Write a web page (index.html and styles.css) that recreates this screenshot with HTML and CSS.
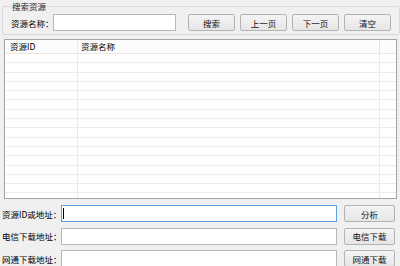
FILE: index.html
```html
<!DOCTYPE html>
<html lang="zh-CN">
<head>
    <meta charset="UTF-8">
    <title>资源下载</title>
    <link rel="stylesheet" href="styles.css">
</head>
<body>
    <fieldset class="search-group">
        <legend>搜索资源</legend>
        <div class="search-row">
            <label class="search-label">资源名称：</label>
            <input class="text-box search-input" type="text">
            <button class="btn btn-search">搜索</button>
            <button class="btn">上一页</button>
            <button class="btn">下一页</button>
            <button class="btn">清空</button>
        </div>
    </fieldset>

    <div class="list-view">
        <div class="list-header">
            <div class="col col-id">资源ID</div>
            <div class="col col-name">资源名称</div>
            <div class="col col-rest"></div>
        </div>
        <div class="list-body">
            <div class="col col-id"></div>
            <div class="col col-name"></div>
            <div class="col col-rest"></div>
        </div>
    </div>

    <div class="address-form">
        <div class="form-row">
            <label class="form-label">资源ID或地址：</label>
            <div class="input-wrap">
                <input class="text-box focused" type="text">
                <span class="caret"></span>
            </div>
            <button class="btn btn-side">分析</button>
        </div>
        <div class="form-row">
            <label class="form-label">电信下载地址：</label>
            <div class="input-wrap">
                <input class="text-box" type="text">
            </div>
            <button class="btn btn-side">电信下载</button>
        </div>
        <div class="form-row">
            <label class="form-label">网通下载地址：</label>
            <div class="input-wrap">
                <input class="text-box" type="text">
            </div>
            <button class="btn btn-side">网通下载</button>
        </div>
    </div>
</body>
</html>
```

FILE: styles.css
```css
body {
    margin: 0;
    width: 400px;
    height: 266px;
    overflow: hidden;
    background-color: #f0f0f0;
    font-family: "Noto Sans CJK SC", "DejaVu Sans", sans-serif;
    font-size: 8.5px;
    color: #000;
}

.search-group {
    margin: 0 3px 0 2px;
    padding: 2px 8px 3px 8px;
    border: 1px solid #d6dadd;
    border-radius: 2px;
}

.search-group legend {
    padding: 0 1px;
    line-height: 12px;
    color: #222;
}

.search-row {
    display: flex;
    align-items: center;
    height: 17px;
}

.search-label {
    flex-shrink: 0;
    width: 42px;
    white-space: nowrap;
}

.text-box {
    box-sizing: border-box;
    flex-shrink: 0;
    height: 17px;
    margin: 0;
    padding: 0 2px;
    border: 1px solid #b4b8bd;
    background-color: #fff;
    font: inherit;
    outline: none;
}

.text-box.focused {
    border-color: #5fa2e4;
}

.search-input {
    width: 123px;
}

.btn {
    box-sizing: border-box;
    flex-shrink: 0;
    width: 47px;
    height: 17px;
    margin: 0 0 0 5px;
    padding: 0;
    border: 1px solid #b3b3b3;
    border-radius: 2px;
    background: linear-gradient(#f4f4f4, #e6e6e6);
    font: inherit;
    color: #111;
    white-space: nowrap;
}

.btn-search {
    margin-left: 12px;
}

.list-view {
    box-sizing: border-box;
    margin: 4px 3px 0 4px;
    height: 160px;
    border: 1px solid #a3a3a3;
    background-color: #fff;
    display: flex;
    flex-direction: column;
}

.list-header {
    display: flex;
    height: 13px;
    line-height: 13px;
    border-bottom: 1px solid #e9e9e2;
    background-color: #fcfcfc;
}

.list-body {
    flex: 1;
    display: flex;
    background-image: repeating-linear-gradient(
        to bottom,
        transparent 0, transparent 8.3px,
        #efeee2 8.3px, #efeee2 9.3px
    );
}

.col {
    box-sizing: border-box;
    height: 100%;
}

.col-id {
    width: 73px;
    padding-left: 5px;
    border-right: 1px solid #ecebe0;
}

.col-name {
    width: 302px;
    padding-left: 3px;
    border-right: 1px solid #ecebe0;
}

.list-header .col-rest {
    flex: 1;
}

.list-header .col-name {
    border-right-color: #e4e4e4;
}

.address-form {
    display: flex;
    flex-direction: column;
    gap: 5.5px;
    margin-top: 6px;
}

.form-row {
    display: flex;
    align-items: center;
    height: 17px;
}

.form-label {
    flex-shrink: 0;
    width: 59px;
    padding-left: 2px;
    white-space: nowrap;
}

.input-wrap {
    position: relative;
    flex-shrink: 0;
    width: 276px;
    height: 17px;
}

.input-wrap .text-box {
    width: 100%;
}

.caret {
    position: absolute;
    left: 2px;
    top: 3px;
    width: 1px;
    height: 11px;
    background-color: #000;
}

.btn-side {
    width: 51px;
    margin-left: 7px;
}
```
